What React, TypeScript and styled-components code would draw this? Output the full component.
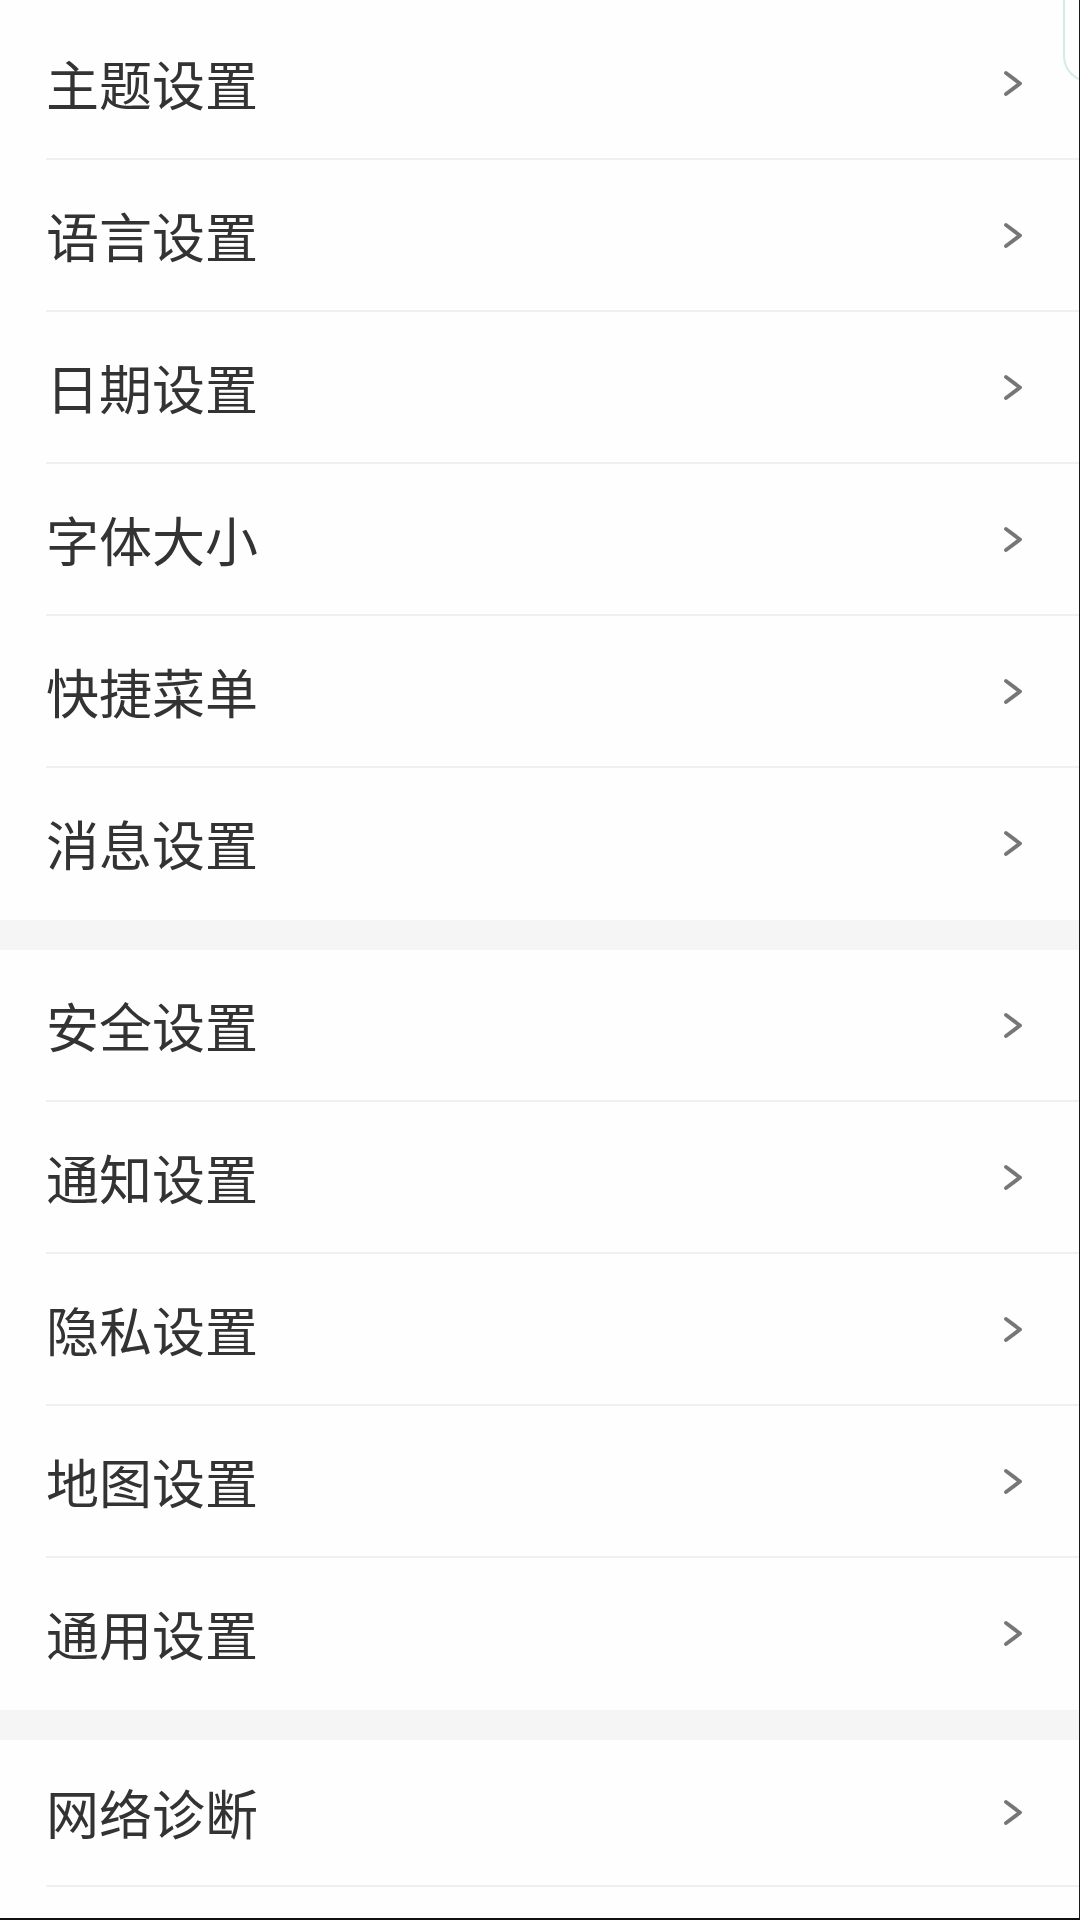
import styled, { createGlobalStyle } from "styled-components";

const GlobalStyle = createGlobalStyle`
  html, body {
    margin: 0;
    padding: 0;
    background: #ffffff;
  }

  * {
    box-sizing: border-box;
  }
`;

const Page = styled.div`
  position: relative;
  width: 1080px;
  height: 1920px;
  overflow: hidden;
  background: #fefefe;
  border-right: 1px solid #1a1a1a;
  border-bottom: 2px solid #111;
  padding-top: 8px;
  font-family: "Noto Sans CJK SC", "Noto Sans", sans-serif;
`;

const FloatingEdge = styled.div`
  position: absolute;
  top: -30px;
  left: 1063px;
  width: 60px;
  height: 112px;
  border: 2px solid #d3ece6;
  border-radius: 26px;
`;

const Section = styled.div<{ $closed?: boolean }>`
  display: flex;
  flex-direction: column;
  background: #fefefe;

  & > div:last-child {
    border-bottom-color: ${(p) => (p.$closed ? "#f0f0f0" : "transparent")};
  }
`;

const Gap = styled.div`
  height: 30px;
  background: #f5f5f5;
`;

const Row = styled.div<{ $height?: number }>`
  display: flex;
  align-items: center;
  justify-content: space-between;
  height: ${(p) => p.$height ?? 152}px;
  margin-left: 46px;
  padding-right: 55px;
  border-bottom: 2px solid #f0f0f0;
`;

const Label = styled.span`
  font-size: 53px;
  line-height: 1;
  color: #333333;
`;

const Chevron = () => (
  <svg width="21" height="27" viewBox="0 0 21 27" fill="none">
    <path
      d="M3 3 L17 13.5 L3 24"
      stroke="#767676"
      strokeWidth="3.8"
      strokeLinecap="round"
      strokeLinejoin="round"
    />
  </svg>
);

const groups: string[][] = [
  ["主题设置", "语言设置", "日期设置", "字体大小", "快捷菜单", "消息设置"],
  ["安全设置", "通知设置", "隐私设置", "地图设置", "通用设置"],
  ["网络诊断"],
];

const SettingRow = ({ label, last }: { label: string; last?: boolean }) => (
  <Row $height={last ? 147 : undefined}>
    <Label>{label}</Label>
    <Chevron />
  </Row>
);

export default function App() {
  return (
    <>
      <GlobalStyle />
      <Page>
        <FloatingEdge />
        {groups.map((items, gi) => {
          const isLast = gi === groups.length - 1;
          return (
            <div key={gi}>
              {gi > 0 && <Gap />}
              <Section $closed={isLast}>
                {items.map((label) => (
                  <SettingRow key={label} label={label} last={isLast} />
                ))}
              </Section>
            </div>
          );
        })}
      </Page>
    </>
  );
}
